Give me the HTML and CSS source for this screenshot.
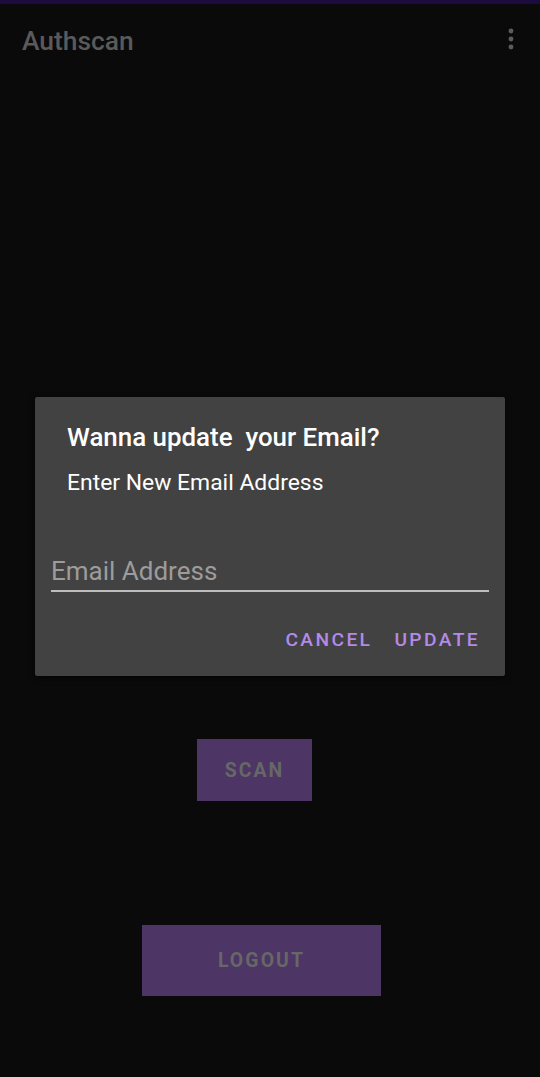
FILE: index.html
```html
<!DOCTYPE html>
<html>
<head>
<meta charset="utf-8">
<link rel="stylesheet" href="styles.css">
</head>
<body>
<div class="status"></div>
<header class="appbar">
  <span class="title">Authscan</span>
  <svg class="menu" width="8" height="22" viewBox="0 0 8 22"><circle cx="4" cy="3" r="2.4"/><circle cx="4" cy="11" r="2.4"/><circle cx="4" cy="19" r="2.4"/></svg>
</header>
<main class="content">
  <button class="btn scan">SCAN</button>
  <button class="btn logout">LOGOUT</button>
</main>
<div class="dialog">
  <h2 class="dtitle">Wanna update&nbsp; your Email?</h2>
  <p class="dmsg">Enter New Email Address</p>
  <div class="field"><span class="placeholder">Email Address</span></div>
  <div class="actions">
    <span class="act">CANCEL</span>
    <span class="act">UPDATE</span>
  </div>
</div>
</body>
</html>
```
FILE: styles.css
```css
html, body {
  margin: 0;
  padding: 0;
  background: #0a0a0a;
  font-family: Roboto, "Liberation Sans", sans-serif;
  height: 1077px;
  overflow: hidden;
}
.status {
  height: 4px;
  background: #1b0b3f;
}
.appbar {
  height: 74px;
  display: flex;
  align-items: center;
  justify-content: space-between;
  padding: 0 25px 0 22px;
}
.title {
  color: #5a5a5a;
  font-size: 26.4px;
  font-weight: 500;
  margin-top: 0;
}
.menu {
  fill: #5c5c5c;
  margin-top: -4px;
}
.content {
  display: flex;
  flex-direction: column;
  align-items: flex-start;
  padding-top: 661px;
}
.btn {
  border: none;
  background: #4d3566;
  color: #676767;
  font-family: Roboto, "Liberation Sans", sans-serif;
  font-weight: 700;
  font-size: 19.4px;
  letter-spacing: 2.1px;
  padding: 0;
}
.scan {
  width: 115px;
  height: 62px;
  margin-left: 197px;
}
.logout {
  width: 239px;
  height: 71px;
  margin-top: 124px;
  margin-left: 142px;
}
.dialog {
  position: absolute;
  left: 35px;
  top: 397px;
  width: 470px;
  height: 279px;
  box-sizing: border-box;
  background: #424242;
  border-radius: 2px;
  padding: 23px 16px 0 16px;
  box-shadow: 0 2px 6px rgba(0,0,0,0.6);
}
.dtitle {
  margin: 0 0 0 16px;
  color: #ffffff;
  font-size: 25.9px;
  font-weight: 500;
  line-height: 34px;
}
.dmsg {
  margin: 14px 0 0 16px;
  color: #ffffff;
  font-size: 22.9px;
  line-height: 30px;
}
.field {
  margin-top: 52px;
  border-bottom: 2px solid #bdbdbd;
  height: 40px;
  display: flex;
  align-items: flex-end;
}
.placeholder {
  color: #9c9c9c;
  font-size: 26px;
  line-height: 34px;
  padding-bottom: 2px;
}
.actions {
  display: flex;
  justify-content: flex-end;
  gap: 22px;
  margin-top: 36px;
  padding-right: 9px;
}
.act {
  color: #b48ae6;
  font-size: 19.2px;
  font-weight: 500;
  letter-spacing: 2.4px;
}
```
